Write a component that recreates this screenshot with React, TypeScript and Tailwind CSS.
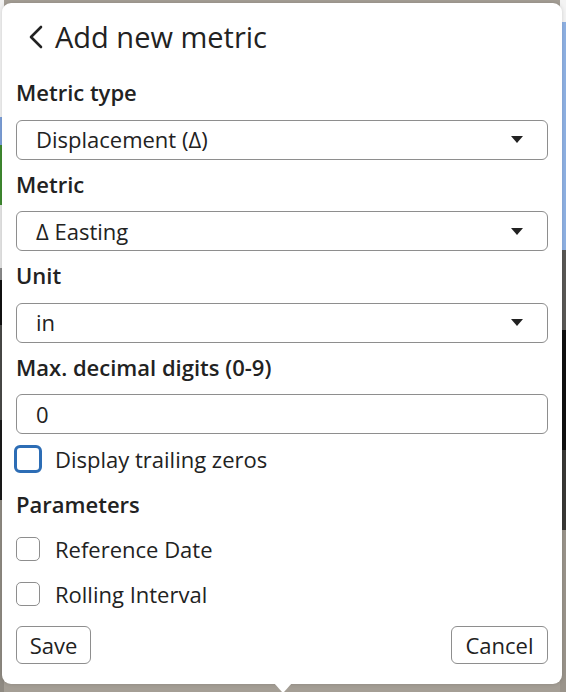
import React from "react";

const font = { fontFamily: '"Open Sans", "Noto Sans", sans-serif' };

function Caret() {
  return (
    <svg width="12" height="7" viewBox="0 0 12 7" className="shrink-0">
      <path d="M0 0 H12 L6 7 Z" fill="#222" />
    </svg>
  );
}

function Label({ children, first }: { children: React.ReactNode; first?: boolean }) {
  return (
    <div
      className={`${first ? "mt-[9px]" : "mt-[11px]"} mb-[14.6px] text-[22px] leading-[26px] font-semibold text-[#222]`}
    >
      {children}
    </div>
  );
}

function SelectBox({ value }: { value: string }) {
  return (
    <div className="h-10 shrink-0 border border-[#8e8e8e] rounded-[6px] flex items-center justify-between pl-[19px] pr-[24px] text-[22px] text-[#222]">
      <span>{value}</span>
      <Caret />
    </div>
  );
}

function CheckRow({ label, className }: { label: string; className: string }) {
  return (
    <div className={`flex items-center h-6 ${className}`}>
      <div className="w-6 h-6 border border-[#8e8e8e] rounded-[5px] bg-white" />
      <span className="ml-[15px] text-[22px] text-[#222]">{label}</span>
    </div>
  );
}

export default function App() {
  return (
    <div className="relative w-[566px] h-[692px] overflow-hidden bg-[#a49e95]" style={font}>
      {/* photo behind the popover */}
      <div className="absolute inset-0 flex justify-between">
        <div className="w-[4px] flex flex-col">
          <div className="h-[117px] bg-[#f1f1f1]" />
          <div className="h-[28px] bg-[#7c9fd8]" />
          <div className="h-[60px] bg-[#3f8a30]" />
          <div className="h-[63px] bg-[#e6e6e6]" />
          <div className="h-[12px] bg-[#8a8a8a]" />
          <div className="h-[45px] bg-[#111]" />
          <div className="h-[95px] bg-[#4a4a48]" />
          <div className="h-[80px] bg-[#1a1a1a]" />
          <div className="flex-1 bg-[#8f8a82]" />
        </div>
        <div className="w-[6px] flex flex-col">
          <div className="h-[22px] bg-[#f3f3f3]" />
          <div className="h-[228px] bg-[#8fb1e3]" />
          <div className="h-[80px] bg-[#5a5855]" />
          <div className="h-[120px] bg-[#111]" />
          <div className="h-[80px] bg-[#3a3936]" />
          <div className="flex-1 bg-[#9a948b]" />
        </div>
      </div>

      <div className="absolute left-[2px] top-[3px] w-[560px] h-[681px] bg-white rounded-[9px] shadow-[0_0_4px_rgba(0,0,0,0.15)] px-[14px] flex flex-col">
        <div className="h-[67px] shrink-0 flex items-center">
          <svg width="16" height="24" viewBox="0 0 16 24" className="ml-[12px]">
            <polyline points="13,2 3,12 13,22" fill="none" stroke="#222" strokeWidth="2.6" strokeLinecap="round" strokeLinejoin="round" />
          </svg>
          <span className="ml-[11px] text-[29px] text-[#222]">Add new metric</span>
        </div>

        <Label first>Metric type</Label>
        <SelectBox value="Displacement (Δ)" />
        <Label>Metric</Label>
        <SelectBox value="Δ Easting" />
        <Label>Unit</Label>
        <SelectBox value="in" />
        <Label>Max. decimal digits (0-9)</Label>
        <div className="h-10 shrink-0 border border-[#8e8e8e] rounded-[6px] flex items-center pl-[19px] text-[22px] text-[#222]">
          0
        </div>

        <div className="mt-[11px] flex items-center h-7">
          <div className="-ml-[2px] w-7 h-7 border-[3px] border-[#2d6db5] rounded-[6px]" />
          <span className="ml-[13px] text-[22px] text-[#222]">Display trailing zeros</span>
        </div>

        <div className="mt-[18px] text-[22px] leading-[26px] font-semibold text-[#222]">Parameters</div>
        <CheckRow label="Reference Date" className="mt-[20px]" />
        <CheckRow label="Rolling Interval" className="mt-[21px]" />

        <div className="mt-[20px] flex justify-between">
          <button className="h-[38px] w-[75px] border border-[#8e8e8e] rounded-[6px] text-[22px] text-[#222] bg-white">
            Save
          </button>
          <button className="h-[38px] w-[97px] border border-[#8e8e8e] rounded-[6px] text-[22px] text-[#222] bg-white">
            Cancel
          </button>
        </div>
      </div>

      <svg width="18" height="9" viewBox="0 0 18 9" className="absolute left-[274px] top-[683px]">
        <path d="M0 0 H18 L10 9 H8 Z" fill="#fff" />
      </svg>
    </div>
  );
}
